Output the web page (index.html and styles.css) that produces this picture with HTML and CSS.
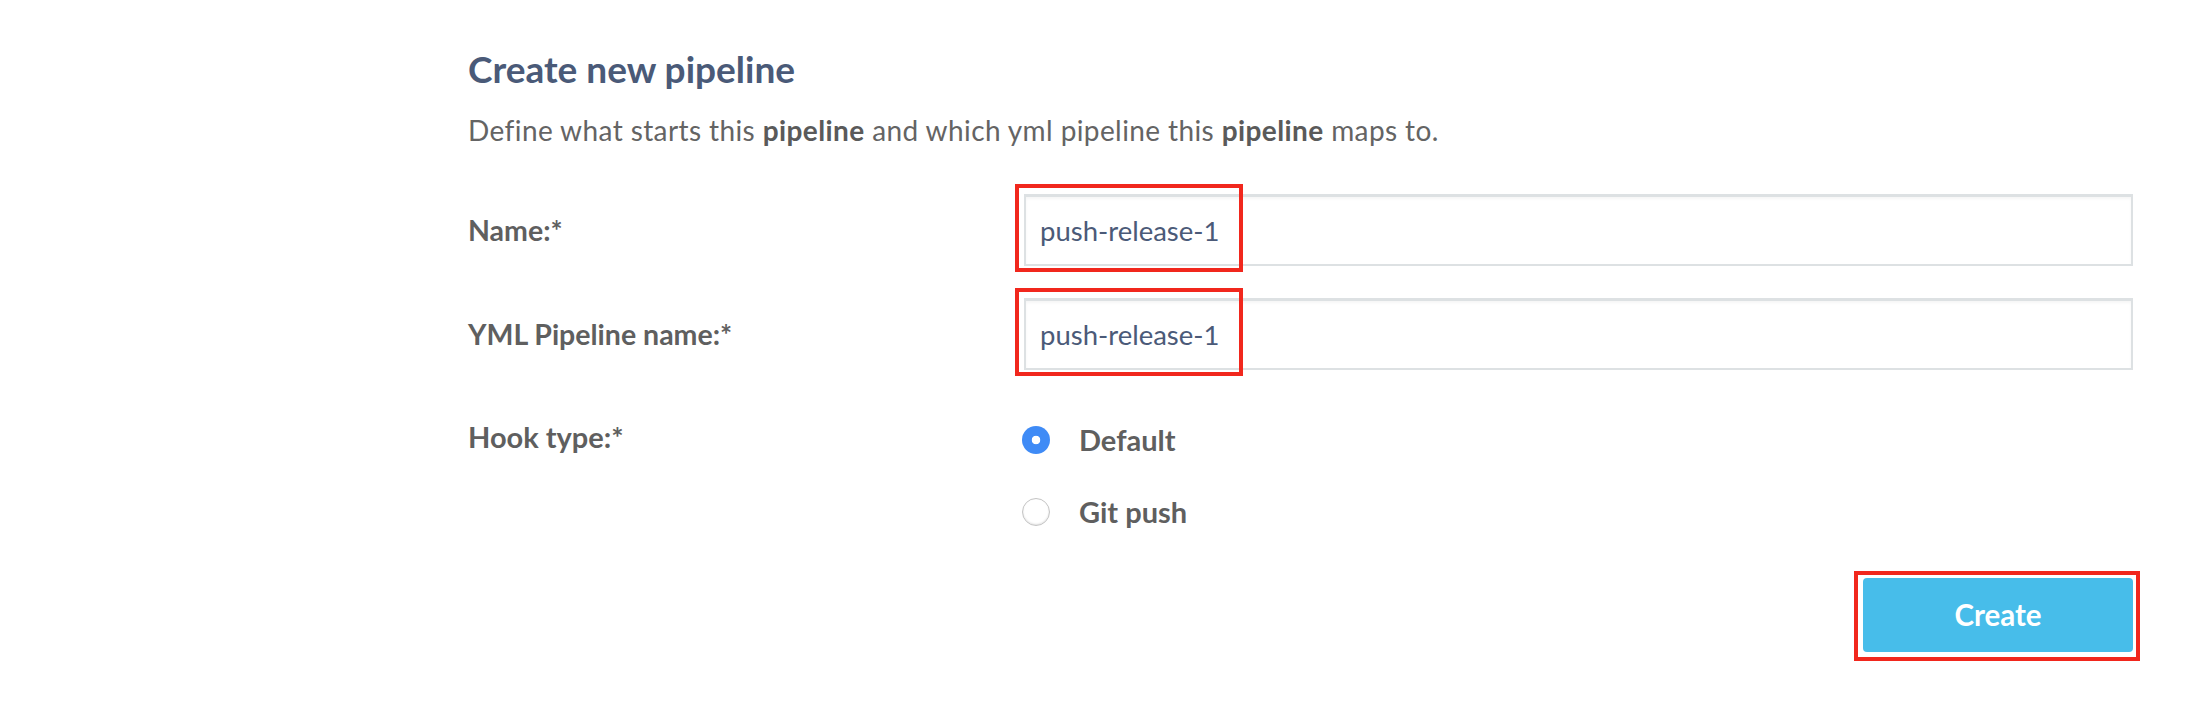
FILE: index.html
```html
<!DOCTYPE html>
<html lang="en">
<head>
<meta charset="utf-8">
<title>Create new pipeline</title>
<link rel="stylesheet" href="styles.css">
</head>
<body>
<main class="page">
  <h1 class="title">Create new pipeline</h1>
  <p class="desc">Define what starts this <b>pipeline</b> and which yml pipeline this <b>pipeline</b> maps to.</p>
  <form class="form">
    <div class="row">
      <label class="label" for="name">Name:*</label>
      <div class="field">
        <input class="text-input" id="name" type="text" value="push-release-1">
        <span class="mark"></span>
      </div>
    </div>
    <div class="row">
      <label class="label" for="yml">YML Pipeline name:*</label>
      <div class="field">
        <input class="text-input" id="yml" type="text" value="push-release-1">
        <span class="mark"></span>
      </div>
    </div>
    <div class="row row-hook">
      <span class="label label-hook">Hook type:*</span>
      <div class="options">
        <label class="option"><input class="radio" type="radio" name="hook" checked><span>Default</span></label>
        <label class="option"><input class="radio" type="radio" name="hook"><span>Git push</span></label>
      </div>
    </div>
    <div class="actions">
      <div class="btn-wrap">
        <button class="btn" type="button">Create</button>
        <span class="mark mark-btn"></span>
      </div>
    </div>
  </form>
</main>
</body>
</html>
```
FILE: styles.css
```css
html, body {
  margin: 0;
  padding: 0;
  background: #ffffff;
}

body {
  min-height: 100vh;
  font-family: Lato, "Open Sans", "Liberation Sans", sans-serif;
}

.page {
  margin: 0 75px 0 468px;
  padding-top: 47px;
  padding-bottom: 40px;
}

.title {
  margin: 0;
  font-size: 37px;
  line-height: 1.2;
  font-weight: 700;
  color: #4a5a78;
}

.desc {
  margin: 23px 0 0 0;
  font-size: 28px;
  line-height: 1.2;
  letter-spacing: 0.4px;
  color: #646464;
}

.desc b {
  font-weight: 700;
  color: #5a5a5a;
}

.form {
  margin-top: 46px;
  display: flex;
  flex-direction: column;
}

.row {
  display: grid;
  grid-template-columns: 556px 1fr;
  align-items: center;
}

.row + .row {
  margin-top: 32px;
}

.row.row-hook {
  margin-top: 56px;
  align-items: start;
}

.label {
  font-size: 28.5px;
  font-weight: 700;
  color: #5f5f5f;
}

.label-hook {
  font-size: 29px;
  line-height: 28px;
  margin-top: -3px;
}

.field {
  position: relative;
}

.text-input {
  display: block;
  box-sizing: border-box;
  width: 100%;
  height: 72px;
  margin: 0;
  padding: 0 14px;
  border: 2px solid #dde1e3;
  border-top-width: 3px;
  border-radius: 0;
  background: #ffffff;
  box-shadow: inset 0 2px 3px rgba(0, 0, 0, 0.04);
  font-family: Lato, "Open Sans", "Liberation Sans", sans-serif;
  font-size: 27.5px;
  color: #4b5a78;
  outline: none;
}

.mark {
  position: absolute;
  left: -9px;
  top: -10px;
  width: 228px;
  height: 88px;
  box-sizing: border-box;
  border: 4px solid #f1271d;
  pointer-events: none;
}

.options {
  display: flex;
  flex-direction: column;
  gap: 44px;
}

.option {
  display: flex;
  align-items: center;
  height: 28px;
  margin-left: -2px;
  font-size: 29px;
  font-weight: 700;
  color: #5f5f5f;
}

.radio {
  appearance: none;
  -webkit-appearance: none;
  box-sizing: border-box;
  width: 28px;
  height: 28px;
  margin: 0 29px 0 0;
  border-radius: 50%;
  border: 1px solid #c4c4c4;
  background: #ffffff;
  box-shadow: inset 0 -1px 2px rgba(0, 0, 0, 0.12);
  flex: none;
}

.radio:checked {
  border: none;
  background: radial-gradient(circle, #ffffff 0 4px, #3f8bf6 4.6px);
  box-shadow: none;
}

.actions {
  display: flex;
  justify-content: flex-end;
  margin-top: 52px;
}

.btn-wrap {
  position: relative;
  display: flex;
}

.btn {
  width: 270px;
  height: 74px;
  border: none;
  border-radius: 4px;
  background: #47bdea;
  color: #ffffff;
  font-family: Lato, "Open Sans", "Liberation Sans", sans-serif;
  font-size: 29.5px;
  font-weight: 700;
}

.mark.mark-btn {
  left: -9px;
  top: -7px;
  width: 286px;
  height: 90px;
}
```
